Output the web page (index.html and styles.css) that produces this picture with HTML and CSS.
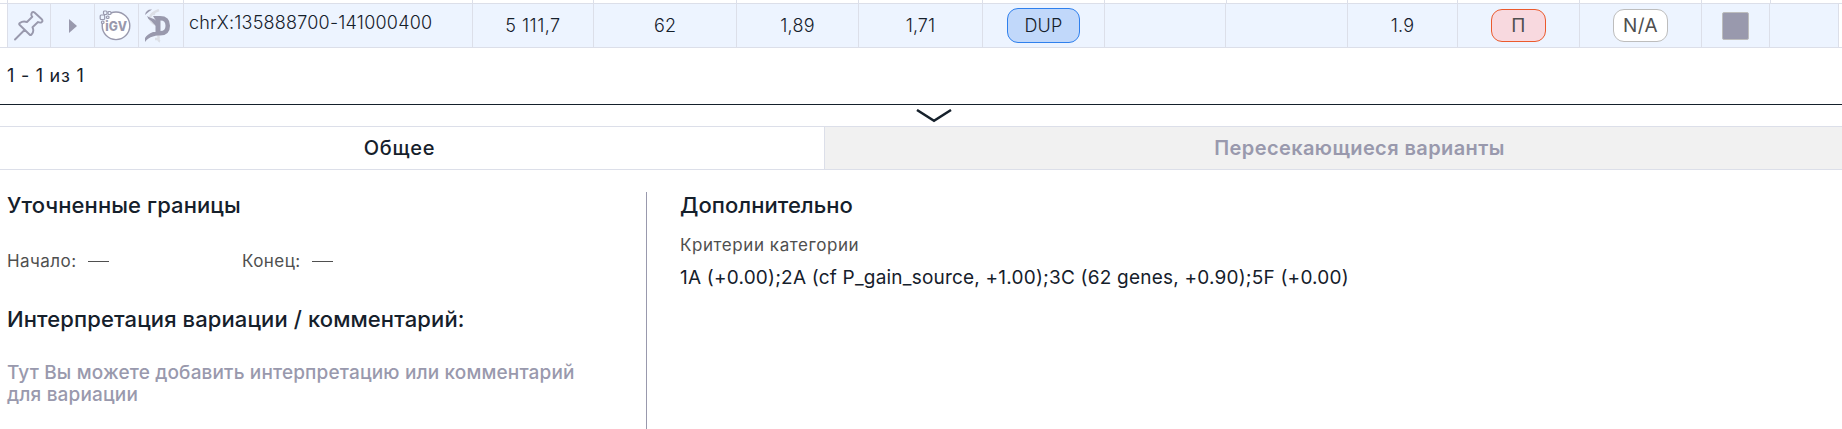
FILE: index.html
```html
<!DOCTYPE html>
<html lang="ru">
<head>
<meta charset="utf-8">
<title>Варианты</title>
<link rel="stylesheet" href="styles.css">
</head>
<body>
<div class="grid grid-prev"><i></i><i></i><i></i><i></i><i></i><i></i><i></i><i></i><i></i><i></i><i></i><i></i><i></i><i></i></div>
<div class="grid grid-row">
  <div class="cell"><svg width="30" height="30" viewBox="0 0 30 30" fill="none" stroke="#9999ad" stroke-width="1.900" stroke-linejoin="round" stroke-linecap="round"><path d="M1 28.500 10.500 19M18 1.500Q19 .5 20.500 1.500L27.800 8.300Q29.500 10.500 27 11.500 25.500 11.800 24 11L18.500 16.300Q20.500 20.500 17.500 23.500 16.500 24.500 15.500 23.500L5.500 13.800Q4.800 12.800 5.800 12 9 9.500 13 11L18.300 5.800Q16.500 3.500 18 1.500Z"/></svg></div>
  <div class="cell"><svg width="8" height="14" viewBox="0 0 8 14"><path d="M0 0 8 7 0 14Z" fill="#9999ad"/></svg></div>
  <div class="cell"><svg class="igv-icon" width="32" height="32" viewBox="0 0 32 32"><circle cx="17" cy="15.800" r="13.800" fill="#fff" stroke="#9999ad" stroke-width="1.400"/><path d="M0 0H11V6L7 11H0Z" fill="#edf4ff"/><g fill="#edf4ff" stroke="#9999ad" stroke-width="1.200"><rect x="1.200" y="5" width="4.500" height="4.500" rx="1"/><rect x="4.500" y="1" width="3.500" height="3.500" rx="1"/><rect x="9" y="1.500" width="3" height="3" rx="1"/><rect x="7.500" y="6" width="2.500" height="2.500" rx="1"/><rect x="2.500" y="11" width="2.500" height="2.500" rx="1"/></g><text x="17.300" y="20.500" text-anchor="middle" class="igv" textLength="22" lengthAdjust="spacingAndGlyphs">iGV</text></svg></div>
  <div class="cell"><svg class="helix" width="26" height="34" viewBox="0 0 26 34" fill="none"><path d="M14 1C1 6 4 12 11 16M12 25C16 28 11 31 15 32.500M7 4 10 5.500M10 30 14 30" stroke="#dcdfe6" stroke-width="2.500"/><path d="M0 6Q1 0 7 .5L3.500 3ZM2 7Q5 9 9 10L13 13V19L9 15Q7 12 3.500 10ZM8 23H14Q12 27 8 27.500 3 28.500 0 33V29Q2 25.500 8 23Z" fill="#9999ad"/><path fill-rule="evenodd" d="M8 7H15Q25 7 25 16.700T15 26.500H10.500V11ZM15.500 11.500V22Q20.500 22 20.500 16.700T15.500 11.500Z" fill="#9999ad"/></svg></div>
  <div class="cell region">chrX:135888700-141000400</div>
  <div class="cell num">5 111,7</div>
  <div class="cell">62</div>
  <div class="cell">1,89</div>
  <div class="cell">1,71</div>
  <div class="cell"><span class="tag dup">DUP</span></div>
  <div class="cell"></div>
  <div class="cell"></div>
  <div class="cell">1.9</div>
  <div class="cell"><span class="tag path">П</span></div>
  <div class="cell"><span class="tag na">N/A</span></div>
  <div class="cell"><span class="swatch"></span></div>
  <div class="cell"></div>
</div>
<div class="pager">1 - 1 из 1</div>
<div class="collapse"><svg width="36" height="14" viewBox="0 0 36 14" fill="none" stroke="#15202b" stroke-width="2.500"><path d="M1 1 18 11.800 35 1"/></svg></div>
<div class="tabs"><div class="tab active">Общее</div><div class="tab other">Пересекающиеся варианты</div></div>
<div class="details">
  <section class="left">
    <h2>Уточненные границы</h2>
    <div class="bounds"><div class="bound">Начало:<span class="dash"></span></div><div class="bound">Конец:<span class="dash"></span></div></div>
    <h2>Интерпретация вариации / комментарий:</h2>
    <p class="hint">Тут Вы можете добавить интерпретацию или комментарий<br>для вариации</p>
  </section>
  <section class="right">
    <h2 class="extra">Дополнительно</h2>
    <div class="label">Критерии категории</div>
    <div class="criteria">1A (+0.00);2A (cf P_gain_source, +1.00);3C (62 genes, +0.90);5F (+0.00)</div>
  </section>
</div>
</body>
</html>
```
FILE: styles.css
```css
* { box-sizing: border-box; }
body { margin: 0; background: #fff; color: #15202b; font-family: Inter, "Noto Sans", sans-serif; height: 429px; overflow: hidden; }
.grid { display: grid; padding-left: 7px; border-bottom: 1px solid #dcdfe9; }
.grid-prev { height: 4px; grid-template-columns: 176px 289px 121px 143px 122px 124px 122px 122px 121px 110px 122px 122px 69px 68px; }
.grid-prev i { border-left: 1px solid #dcdfe9; }
.grid-row { height: 44px; grid-template-columns: 43px 44px 44px 45px 289px 121px 143px 122px 124px 122px 121px 122px 110px 122px 122px 68px 69px; }
.cell { display: flex; align-items: center; justify-content: center; background: #edf4ff; border-left: 1px solid #dcdfe9; font-size: 18px; font-weight: 350; letter-spacing: .17px; white-space: nowrap; }
.cell:last-child { border-right: 1px solid #dcdfe9; width: 70px; }
.num { letter-spacing: .5px; }
.region { justify-content: flex-start; padding: 0 0 6px 5px; letter-spacing: .22px; }
.igv-icon { margin-right: 3px; }
.helix { margin-right: 7px; }
.igv { font: 800 13px Inter, sans-serif; fill: #9999ad; }
.tag { display: flex; align-items: center; justify-content: center; border: 1px solid; border-radius: 11px; }
.dup { width: 73px; height: 35px; background: #c1d8fa; border-color: #2f80ed; color: #15202b; letter-spacing: .2px; }
.path, .na { width: 55px; height: 33px; color: #4f4f4f; font-size: 19px; font-weight: 400; letter-spacing: .4px; }
.path { background: #f8d9df; border-color: #eb5a2d; }
.na { background: #fff; border-color: #bdbdbd; }
.swatch { width: 27px; height: 28px; border: 1px solid #bdbdbd; border-radius: 2px; background: #9999ad; }
.pager { height: 56px; padding: 15px 7px 0; font-size: 18px; line-height: 26px; letter-spacing: .75px; }
.collapse { height: 22px; border-top: 1px solid #15202b; padding: 4px 0 0 916px; }
.collapse svg { display: block; }
.tabs { display: grid; grid-template-columns: 824px 1fr; height: 44px; border: solid #dcdfe9; border-width: 1px 0; }
.tab { display: flex; align-items: center; justify-content: center; background: #f1f1f1; color: #9999ad; border-left: 1px solid #dcdfe9; font-size: 20px; font-weight: 600; letter-spacing: .4px; padding-bottom: 1px; }
.tab.active { background: #fff; color: #15202b; border: 0; padding-right: 25px; letter-spacing: .75px; font-weight: 550; }
.tab.other { padding-left: 52px; }
.details { display: flex; padding-top: 22px; }
.left { width: 647px; height: 237px; padding-left: 7px; border-right: 1px solid #9999ad; }
.right { padding-left: 33px; }
h2 { margin: 0; font-size: 22px; line-height: 26px; font-weight: 500; letter-spacing: .1px; }
.extra { letter-spacing: .04px; }
.bounds { display: flex; margin: 30px 0 32px; font-size: 17px; line-height: 26px; letter-spacing: .45px; color: #4f4f4f; }
.bound { width: 235px; display: flex; align-items: center; }
.dash { width: 21px; height: 1px; margin-left: 11px; background: #4f4f4f; }
.hint { margin: 30px 0 0; color: #9999ad; font-size: 19px; line-height: 22px; font-weight: 450; letter-spacing: .15px; }
.label { margin-top: 14px; font-size: 17px; line-height: 26px; letter-spacing: .57px; color: #4f4f4f; }
.criteria { margin-top: 7px; font-size: 19px; line-height: 26px; letter-spacing: .21px; }
```
